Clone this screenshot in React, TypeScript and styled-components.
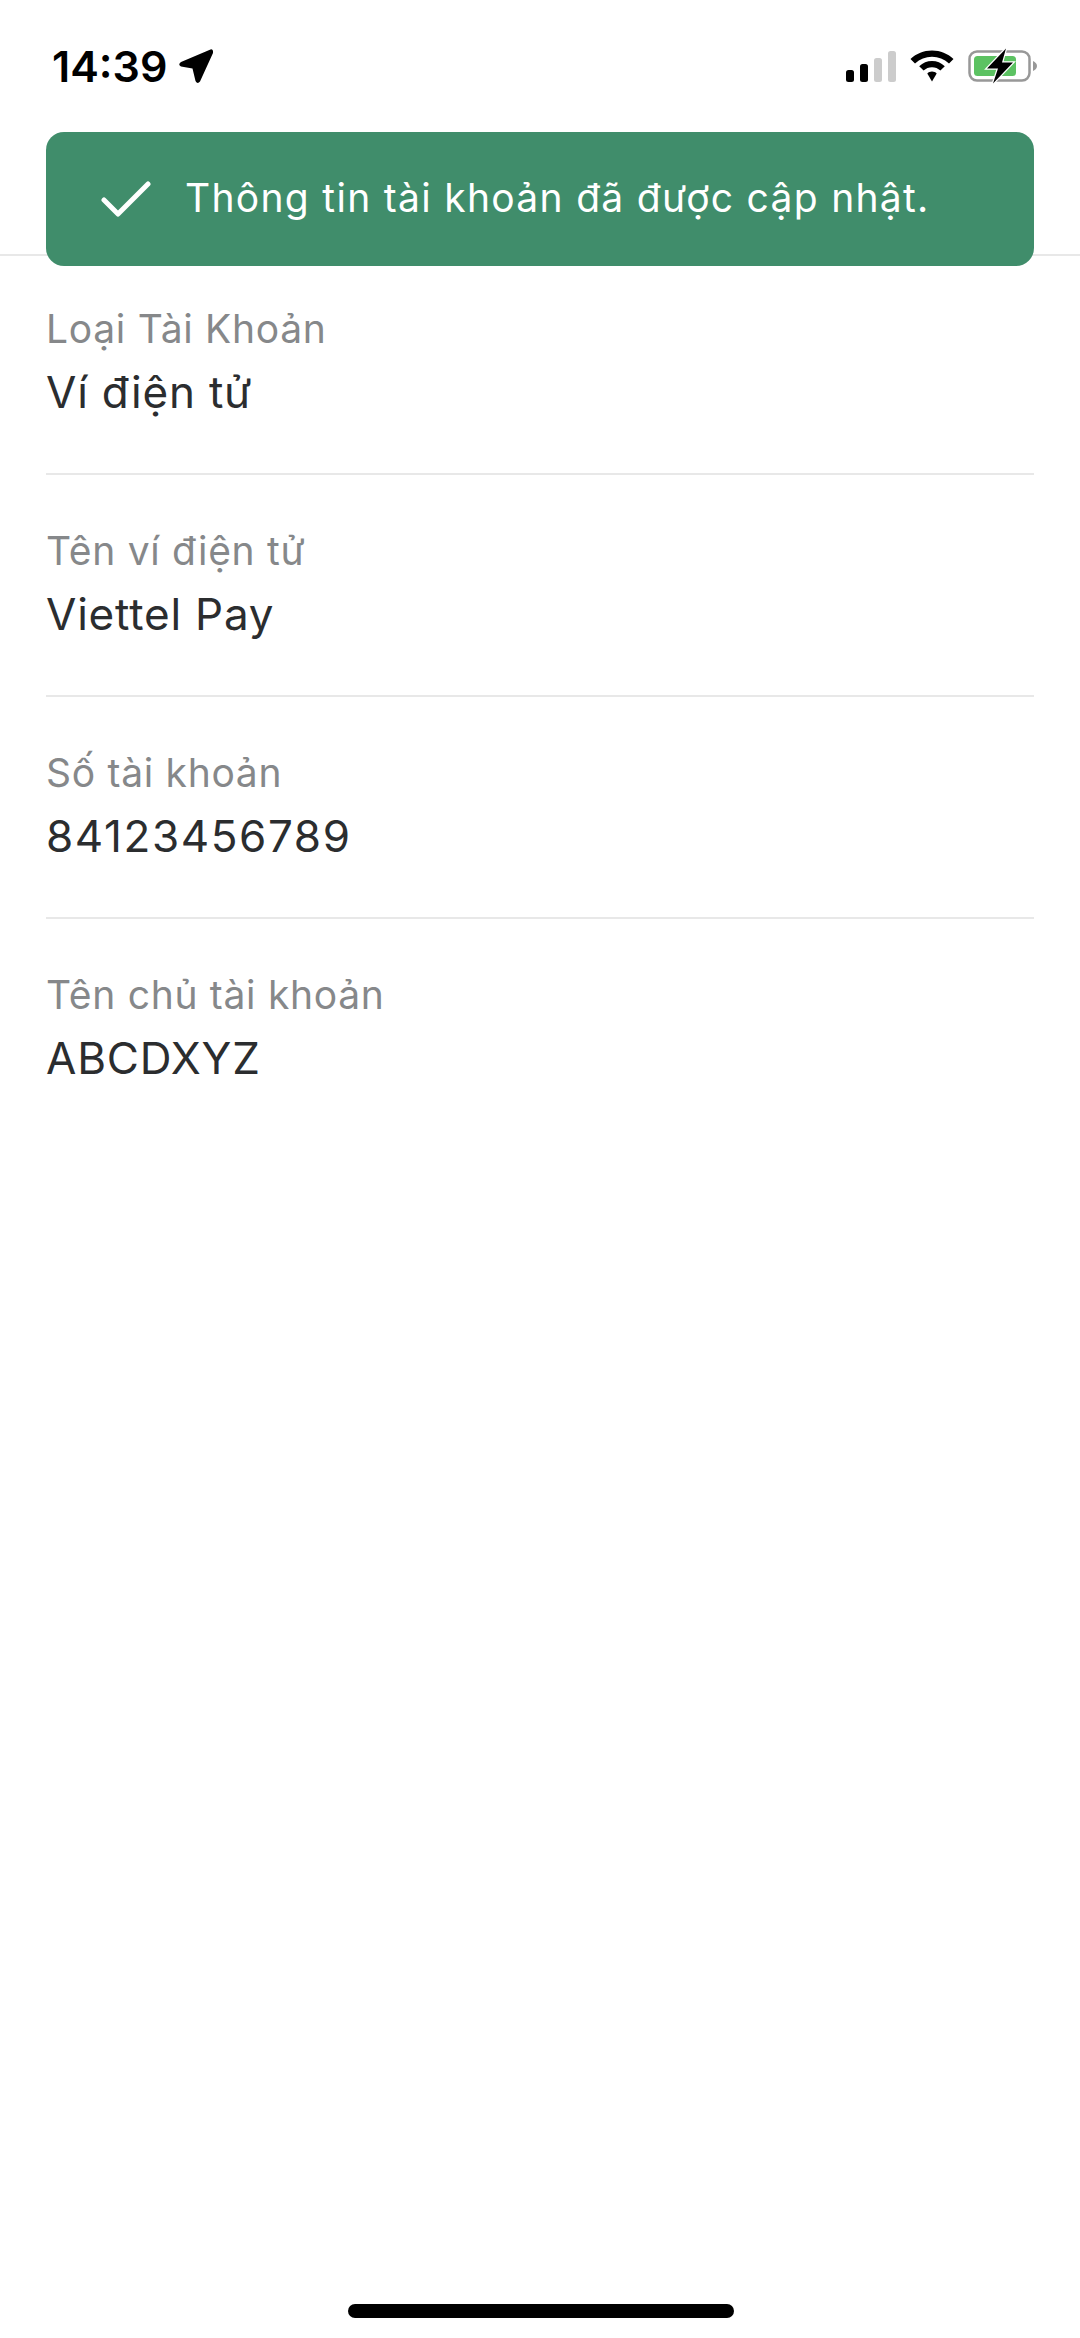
import styled, { createGlobalStyle } from 'styled-components';

const fields = [
  { label: 'Loại Tài Khoản', value: 'Ví điện tử' },
  { label: 'Tên ví điện tử', value: 'Viettel Pay' },
  { label: 'Số tài khoản', value: '84123456789', numeric: true },
  { label: 'Tên chủ tài khoản', value: 'ABCDXYZ' },
];

const App: React.FC = () => {
  return (
    <Screen>
      <GlobalStyle />
      <StatusBar>
        <TimeGroup>
          <Time>14:39</Time>
          <svg width="36" height="36" viewBox="0 0 36 36">
            <path
              d="M32.5 1.5 L3 14 Q-0.5 16.5 3 18.5 L14.5 20.5 L17.5 33 Q19.5 36.5 22 33.5 L35 5 Q35.5 0.5 32.5 1.5 Z"
              fill="#000"
            />
          </svg>
        </TimeGroup>
        <StatusIcons>
          <Signal>
            <SignalBar $height={12} $active />
            <SignalBar $height={18} $active />
            <SignalBar $height={24} />
            <SignalBar $height={31} />
          </Signal>
          <svg width="44" height="32" viewBox="0 0 44 32">
            <path
              d="M22 0.5 C13.5 0.5 6.5 3.5 0.5 9 L5 13.5 C10 9 15.5 6.8 22 6.8 C28.5 6.8 34 9 39 13.5 L43.5 9 C37.5 3.5 30.5 0.5 22 0.5 Z"
              fill="#000"
            />
            <path
              d="M22 11 C17 11 13 12.8 9.2 16.2 L13.6 20.6 C16 18.5 18.8 17.3 22 17.3 C25.2 17.3 28 18.5 30.4 20.6 L34.8 16.2 C31 12.8 27 11 22 11 Z"
              fill="#000"
            />
            <path d="M22 21.5 C20 21.5 18.6 22.2 17.3 23.4 L22 31.5 L26.7 23.4 C25.4 22.2 24 21.5 22 21.5 Z" fill="#000" />
          </svg>
          <svg width="70" height="36" viewBox="0 0 70 36">
            <rect x="1.5" y="3.5" width="60" height="29" rx="7.5" fill="none" stroke="#989898" strokeWidth="2.5" />
            <path d="M65 13 C67.5 14 69 16 69 18 C69 20 67.5 22 65 23 Z" fill="#989898" />
            <rect x="6" y="8" width="42" height="20" rx="3.5" fill="#5cc262" />
            <path
              d="M38 0.5 L19 20.5 L30 20.5 L25 35.5 L45 14.5 L34 14.5 Z"
              fill="#000"
              stroke="#fff"
              strokeWidth="2.5"
              paintOrder="stroke"
            />
          </svg>
        </StatusIcons>
      </StatusBar>
      <Header />
      <Toast>
        <svg width="50" height="38" viewBox="0 0 50 38">
          <path d="M3 20 L17 34 L47 4" fill="none" stroke="#fff" strokeWidth="5" strokeLinecap="round" strokeLinejoin="round" />
        </svg>
        <ToastText>Thông tin tài khoản đã được cập nhật.</ToastText>
      </Toast>
      <FieldList>
        {fields.map(field => {
          return (
            <Field key={field.label}>
              <Label>{field.label}</Label>
              <Value $numeric={field.numeric}>{field.value}</Value>
            </Field>
          );
        })}
      </FieldList>
      <HomeIndicator />
    </Screen>
  );
};

export default App;

const GlobalStyle = createGlobalStyle`
  html, body {
    margin: 0;
    padding: 0;
    background: #fff;
  }
`;

const Screen = styled.div`
  position: relative;
  display: flex;
  flex-direction: column;
  width: 1080px;
  height: 2338px;
  overflow: hidden;
  background: #fff;
  font-family: Inter, 'Noto Sans', sans-serif;
`;

const StatusBar = styled.div`
  display: flex;
  justify-content: space-between;
  align-items: center;
  height: 132px;
  padding: 0 42px 0 52px;
  box-sizing: border-box;
`;

const TimeGroup = styled.div`
  display: flex;
  align-items: center;
  gap: 11px;
`;

const Time = styled.span`
  font-size: 43px;
  font-weight: 600;
  color: #000;
`;

const StatusIcons = styled.div`
  display: flex;
  align-items: center;
  gap: 14px;
`;

const Signal = styled.div`
  display: flex;
  align-items: flex-end;
  gap: 6px;
  height: 31px;
`;

const SignalBar = styled.div<{ $height: number; $active?: boolean }>`
  width: 8px;
  height: ${({ $height }) => $height}px;
  border-radius: 2.5px;
  background: ${({ $active }) => ($active ? '#000' : '#cccccc')};
`;

const Header = styled.div`
  height: 122px;
  border-bottom: 2px solid #e8e8e8;
`;

const Toast = styled.div`
  position: absolute;
  top: 132px;
  left: 46px;
  width: 988px;
  height: 134px;
  display: flex;
  align-items: center;
  gap: 34px;
  padding-left: 55px;
  box-sizing: border-box;
  background: #408d6b;
  border-radius: 18px;
`;

const ToastText = styled.span`
  font-size: 39px;
  line-height: 46px;
  margin-top: -2px;
  color: #fff;
  letter-spacing: 1.3px;
`;

const FieldList = styled.div`
  display: flex;
  flex-direction: column;
  margin-top: -3px;
  padding: 0 46px;
`;

const Field = styled.div`
  height: 222px;
  padding-top: 52px;
  box-sizing: border-box;
  border-bottom: 2px solid #e8e8e8;

  &:last-child {
    border-bottom: none;
  }
`;

const Label = styled.div`
  font-size: 39px;
  line-height: 48px;
  letter-spacing: 0.7px;
  color: #86888a;
`;

const Value = styled.div<{ $numeric?: boolean }>`
  font-size: 44px;
  line-height: 56px;
  margin-top: 11px;
  letter-spacing: ${({ $numeric }) => ($numeric ? '1.6px' : '0.8px')};
  color: #2b2d2f;
`;

const HomeIndicator = styled.div`
  position: absolute;
  bottom: 20px;
  left: 348px;
  width: 386px;
  height: 14px;
  border-radius: 7px;
  background: #000;
`;
